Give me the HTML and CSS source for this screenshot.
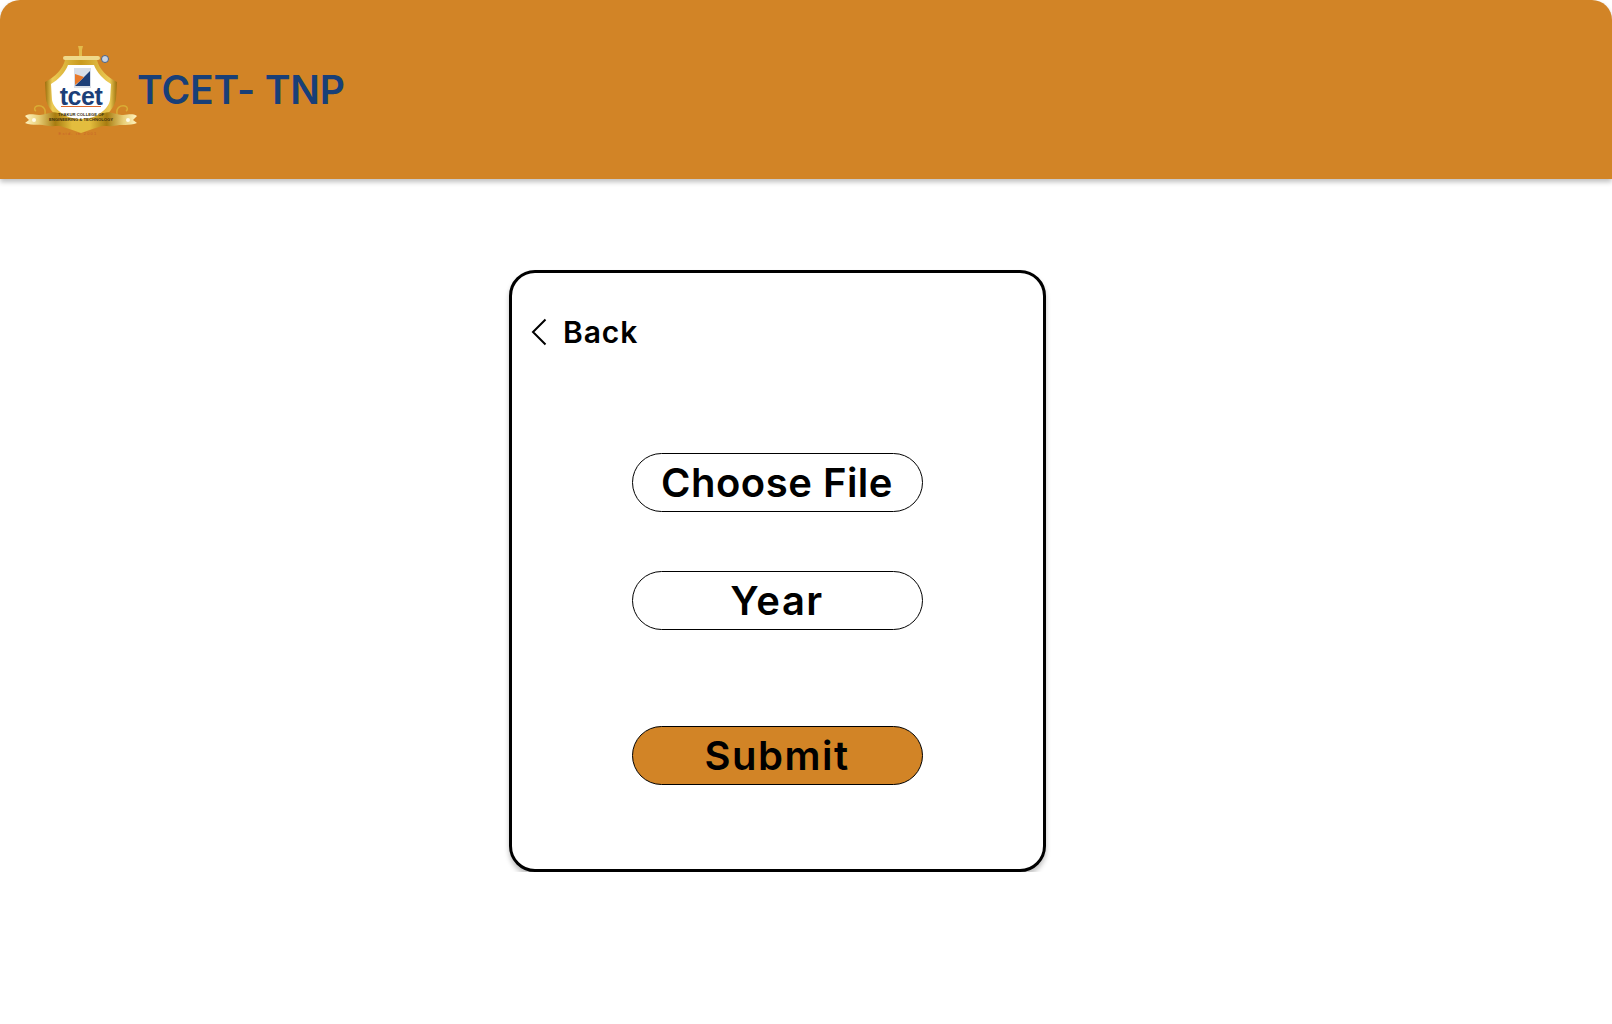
FILE: index.html
```html
<!doctype html>
<html>
<head>
<meta charset="utf-8">
<meta name="viewport" content="width=device-width, initial-scale=1.0">
<link rel="stylesheet" href="styles.css">
<title>TCET- TNP</title>
</head>
<body>
<header class="topbar">
  <svg class="logo" viewBox="0 0 114 92" width="114" height="92">
    <defs>
      <linearGradient id="gold" x1="0" y1="0" x2="1" y2="0">
        <stop offset="0" stop-color="#9c6f0c"/>
        <stop offset="0.1" stop-color="#eccb55"/>
        <stop offset="0.5" stop-color="#c99a1e"/>
        <stop offset="0.9" stop-color="#eccb55"/>
        <stop offset="1" stop-color="#9c6f0c"/>
      </linearGradient>
      <linearGradient id="band" x1="0" y1="0" x2="1" y2="0">
        <stop offset="0" stop-color="#fff3c0"/>
        <stop offset="0.12" stop-color="#e9cf78"/>
        <stop offset="0.27" stop-color="#a87c10"/>
        <stop offset="0.42" stop-color="#e3bd3e"/>
        <stop offset="0.58" stop-color="#e3bd3e"/>
        <stop offset="0.73" stop-color="#a87c10"/>
        <stop offset="0.88" stop-color="#e9cf78"/>
        <stop offset="1" stop-color="#fff3c0"/>
      </linearGradient>
    </defs>
    <!-- finial -->
    <path d="M54 0h5l-1 4v7h-3V4z" fill="#e3bb4a"/>
    <rect x="39" y="10" width="37" height="4" rx="2" fill="#efd98a"/>
    <circle cx="81" cy="13" r="3.5" fill="#c9d3e2" stroke="#2a4f86" stroke-width="0.8"/>
    <!-- shield -->
    <path d="M41 14h32c2 9 10 17 20 22l-1 17c-2 14-18 23-35 29C40 76 24 67 22 53l-1-17c10-5 18-13 20-22z" fill="url(#gold)"/>
    <path d="M44 19h26c3 8 10 15 17 19l-1 16c-2 11-16 18-29 23-13-5-27-12-29-23l-1-16c7-4 14-11 17-19z" fill="#fff"/>
    <!-- small emblem -->
    <rect x="50" y="22" width="17" height="20" fill="#d8dee8"/>
    <path d="M51 40l15-15v15z" fill="#1d3f78"/>
    <path d="M51 39v-11l9 3-4 4z" fill="#e8792a"/>
    <!-- college mark -->
    <text class="logo-mark" x="57" y="59" text-anchor="middle">tcet</text>
    <rect x="37" y="60" width="40" height="1" fill="#e0682a"/>
    <!-- ribbon -->
    <path d="M1 70c7-4 11 1 20-2 5-1 8-3 13-1 8 3 15 6 23 6s15-3 23-6c5-2 8 0 13 1 9 3 13-2 20 2l-4 4 4 3c-8 3-15 1-24 3-6 1-9-1-14 1-7 2-12 4-18 6-6-2-11-4-18-6-5-2-8 0-14-1-9-2-16 0-24-3l4-3z" fill="url(#band)"/>
    <path d="M21 68c1-6-3-9-8-8-3 1-3 4-1 5" fill="none" stroke="#d9ad35" stroke-width="1.5"/>
    <path d="M93 68c-1-6 3-9 8-8 3 1 3 4 1 5" fill="none" stroke="#d9ad35" stroke-width="1.5"/>
    <circle cx="10" cy="74" r="2" fill="#fffbe8"/>
    <circle cx="104" cy="74" r="2" fill="#fffbe8"/>
    <text class="logo-small" x="57" y="70" text-anchor="middle">THAKUR COLLEGE OF</text>
    <text class="logo-small" x="57" y="75" text-anchor="middle">ENGINEERING &amp; TECHNOLOGY</text>
    <text class="logo-est" x="54" y="89" text-anchor="middle">Estd. in 2001</text>
  </svg>
  <h1 class="brand">TCET- TNP</h1>
</header>

<main class="page">
  <section class="card">
    <a class="back" href="#">
      <svg viewBox="0 0 16 28" width="16" height="28"><path d="M14.5 1.5L2 14l12.5 12.5" fill="none" stroke="#000" stroke-width="2"/></svg>
      <span>Back</span>
    </a>
    <div class="actions">
      <button class="pill" type="button">Choose File</button>
      <button class="pill year" type="button">Year</button>
      <button class="pill submit" type="button">Submit</button>
    </div>
  </section>
</main>
</body>
</html>
```

FILE: styles.css
```css
* {
    box-sizing: border-box;
}
body {
    margin: 0;
    background-color: white;
    font-family: Inter, "Open Sans", "Liberation Sans", sans-serif;
    color: #000;
}
.topbar {
    height: 179px;
    display: flex;
    align-items: center;
    padding: 0 0 0 24px;
    background-color: #d28426;
    border-radius: 20px 20px 0 0;
    box-shadow: 0 3px 5px rgba(0, 0, 0, 0.25);
}
.logo {
    flex: none;
    margin-top: 5px;
}
.logo-mark {
    font-family: "Liberation Sans", sans-serif;
    font-size: 25px;
    font-weight: 700;
    fill: #1c3f78;
    letter-spacing: -0.5px;
}
.logo-small {
    font-family: "Liberation Sans", sans-serif;
    font-size: 4.2px;
    font-weight: 700;
    fill: #3a2c08;
}
.logo-est {
    font-family: "Liberation Sans", sans-serif;
    font-size: 4px;
    letter-spacing: 1.2px;
    fill: #c8622a;
}
.brand {
    margin: 0 0 0 -1px;
    font-size: 39px;
    line-height: 46px;
    font-weight: 600;
    letter-spacing: -0.1px;
    color: #183f78;
}
.page {
    padding: 91px 0 0 509px;
}
.card {
    width: 537px;
    height: 602px;
    padding: 41px 20px 0 19px;
    background-color: white;
    border: 3px solid #000;
    border-radius: 26px;
    box-shadow: 0 4px 5px rgba(0, 0, 0, 0.25);
}
.back {
    display: flex;
    align-items: center;
    gap: 16px;
    color: #000;
    text-decoration: none;
    font-size: 30px;
    line-height: 36px;
    font-weight: 600;
    letter-spacing: 0.9px;
}
.actions {
    display: flex;
    flex-direction: column;
    align-items: center;
    margin-top: 103px;
}
.pill {
    width: 291px;
    height: 59px;
    padding: 0;
    background-color: white;
    border: 1px solid #000;
    border-radius: 30px;
    font-family: inherit;
    font-size: 40px;
    font-weight: 600;
    letter-spacing: 0.5px;
    color: #000;
}
.pill + .pill {
    margin-top: 59px;
}
.pill.year {
    letter-spacing: 1.5px;
}
.pill.submit {
    margin-top: 96px;
    background-color: #d28426;
    letter-spacing: 1.5px;
}
```
